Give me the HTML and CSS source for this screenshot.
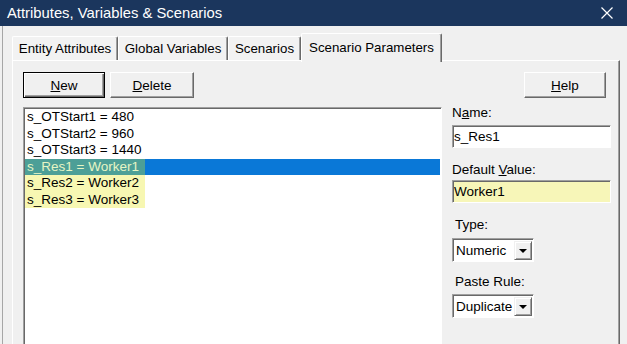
FILE: index.html
```html
<!DOCTYPE html>
<html lang="en">
<head>
    <meta charset="UTF-8">
    <title>Attributes, Variables &amp; Scenarios</title>
    <link rel="stylesheet" href="styles.css">
</head>
<body>
    <div class="titlebar">
        <span>Attributes, Variables &amp; Scenarios</span>
        <svg class="close" width="12" height="12" viewBox="0 0 12 12">
            <path d="M0.5 0.5 L11.5 11.5 M11.5 0.5 L0.5 11.5" stroke="#fff" stroke-width="1.2" fill="none"/>
        </svg>
    </div>

    <div class="frame">
        <div class="tabs">
            <div class="tab tab-entity">Entity Attributes</div>
            <div class="tab tab-global">Global Variables</div>
            <div class="tab tab-scen">Scenarios</div>
            <div class="tab active">Scenario Parameters</div>
        </div>

        <div class="panel">
            <div class="toolbar">
                <button class="btn default"><u>N</u>ew</button>
                <button class="btn wide"><u>D</u>elete</button>
                <button class="btn help"><u>H</u>elp</button>
            </div>

            <div class="content">
                <div class="listbox">
                    <div class="item">s_OTStart1 = 480</div>
                    <div class="item">s_OTStart2 = 960</div>
                    <div class="item">s_OTStart3 = 1440</div>
                    <div class="item selected"><span class="hl">s_Res1 = Worker1</span></div>
                    <div class="item"><span class="hl">s_Res2 = Worker2</span></div>
                    <div class="item"><span class="hl">s_Res3 = Worker3</span></div>
                </div>

                <div class="side">
                    <label class="lbl">N<u>a</u>me:</label>
                    <input class="field first" type="text" value="s_Res1">

                    <label class="lbl gap">Default <u>V</u>alue:</label>
                    <input class="field yellow" type="text" value="Worker1">

                    <label class="lbl gap indent">Type:</label>
                    <div class="combo first">
                        <span class="combo-text">Numeric</span>
                        <span class="combo-btn"><span class="arrow"></span></span>
                    </div>

                    <label class="lbl gap2 indent">Paste Rule:</label>
                    <div class="combo">
                        <span class="combo-text">Duplicate</span>
                        <span class="combo-btn"><span class="arrow"></span></span>
                    </div>
                </div>
            </div>
        </div>
    </div>
</body>
</html>
```

FILE: styles.css
```css
body {
    margin: 0;
    width: 627px;
    height: 344px;
    overflow: hidden;
    background: #f0f0f0;
    color: #000;
    font-family: "Liberation Sans", Arial, sans-serif;
    font-size: 13.5px;
}
.titlebar {
    height: 26px;
    background: #1b365d;
    color: #fff;
    display: flex;
    align-items: center;
    justify-content: space-between;
    padding: 0 14px 0 7px;
    font-size: 14.8px;
}
.frame {
    margin-left: 2px;
    border-left: 1px solid #a6a6a6;
    height: 318px;
    padding-left: 9px;
}
.tabs {
    display: flex;
    align-items: flex-end;
    height: 27px;
    padding-top: 7px;
}
.tab {
    box-sizing: border-box;
    height: 24px;
    line-height: 23px;
    text-align: center;
    border-top: 1px solid #fff;
    border-left: 1px solid #fff;
    border-right: 1px solid #696969;
    box-shadow: inset -1px 0 #a0a0a0;
    border-radius: 2px 2px 0 0;
    background: #f2f2f2;
    font-size: 13.3px;
}
.tab-entity {
    width: 106px;
}
.tab-global {
    width: 110px;
}
.tab-scen {
    width: 73px;
}
.tab.active {
    position: relative;
    z-index: 1;
    width: 141px;
    height: 29px;
    margin-bottom: -2px;
    line-height: 27px;
    background: #f0f0f0;
}
.panel {
    box-sizing: border-box;
    width: 608px;
    height: 300px;
    border-top: 1px solid #fff;
    border-left: 1px solid #fff;
    border-right: 1px solid #696969;
    box-shadow: inset -1px 0 #a0a0a0;
    padding: 11px 9px 0 10px;
}
.toolbar {
    display: flex;
    gap: 5px;
}
.btn {
    box-sizing: border-box;
    width: 82px;
    height: 26px;
    padding: 0;
    font-family: inherit;
    font-size: 13.5px;
    color: #000;
    background: #f0f0f0;
    border: 1px solid;
    border-color: #fff #696969 #696969 #fff;
    box-shadow: inset -1px -1px #a0a0a0;
}
.btn.wide {
    width: 84px;
}
.btn.default {
    border-color: #000;
    box-shadow: inset 1px 1px #fff, inset -1px -1px #696969, inset -2px -2px #a0a0a0;
}
.btn.help {
    margin-left: auto;
    margin-right: 4px;
}
.content {
    display: flex;
    gap: 10px;
    margin-top: 9px;
}
.listbox {
    box-sizing: border-box;
    flex-shrink: 0;
    width: 419px;
    height: 250px;
    background: #fff;
    border: 1px solid;
    border-color: #a0a0a0 #fff #fff #a0a0a0;
    box-shadow: inset 1px 1px #696969;
    padding: 1px 1px 0 1px;
}
.item {
    height: 16.5px;
    line-height: 16px;
    padding-left: 2px;
    white-space: nowrap;
}
.item .hl {
    display: inline-block;
    width: 118px;
    height: 16.5px;
    margin-left: -2px;
    padding-left: 2px;
    background: #f7f7b2;
}
.item.selected {
    background: #0a78d7;
}
.item.selected .hl {
    background: #4d9f97;
    color: #e6f5c4;
}
.side {
    display: flex;
    flex-direction: column;
    flex-shrink: 0;
    width: 159px;
    margin-top: -2px;
}
.lbl {
    height: 16px;
    line-height: 16px;
}
.lbl.gap {
    margin-top: 14px;
}
.lbl.gap2 {
    margin-top: 12px;
}
.lbl.indent {
    padding-left: 3px;
}
.field {
    box-sizing: border-box;
    width: 159px;
    height: 23px;
    margin: 2px 0 0 0;
    padding: 0 1px;
    font-family: inherit;
    font-size: 13.5px;
    color: #000;
    background: #fff;
    border: 1px solid;
    border-color: #a0a0a0 #fff #fff #a0a0a0;
    box-shadow: inset 1px 1px #696969;
    outline: none;
}
.field.first {
    margin-top: 4px;
}
.field.yellow {
    background: #f7f6b8;
}
.combo {
    box-sizing: border-box;
    display: flex;
    align-items: center;
    width: 82px;
    height: 24px;
    margin-top: 4px;
    background: #fff;
    border: 1px solid;
    border-color: #a0a0a0 #fff #fff #a0a0a0;
    box-shadow: inset 1px 1px #696969;
    padding: 2px 1px 1px 2px;
}
.combo.first {
    margin-top: 5px;
}
.combo-text {
    flex: 1;
    padding-left: 1px;
    overflow: hidden;
    white-space: nowrap;
}
.combo-btn {
    box-sizing: border-box;
    width: 18px;
    height: 19px;
    display: flex;
    align-items: center;
    justify-content: center;
    background: #f0f0f0;
    border: 1px solid;
    border-color: #f0f0f0 #696969 #696969 #f0f0f0;
    box-shadow: inset 1px 1px #fff, inset -1px -1px #a0a0a0;
}
.arrow {
    width: 0;
    height: 0;
    border-left: 4px solid transparent;
    border-right: 4px solid transparent;
    border-top: 4px solid #000;
}
```
